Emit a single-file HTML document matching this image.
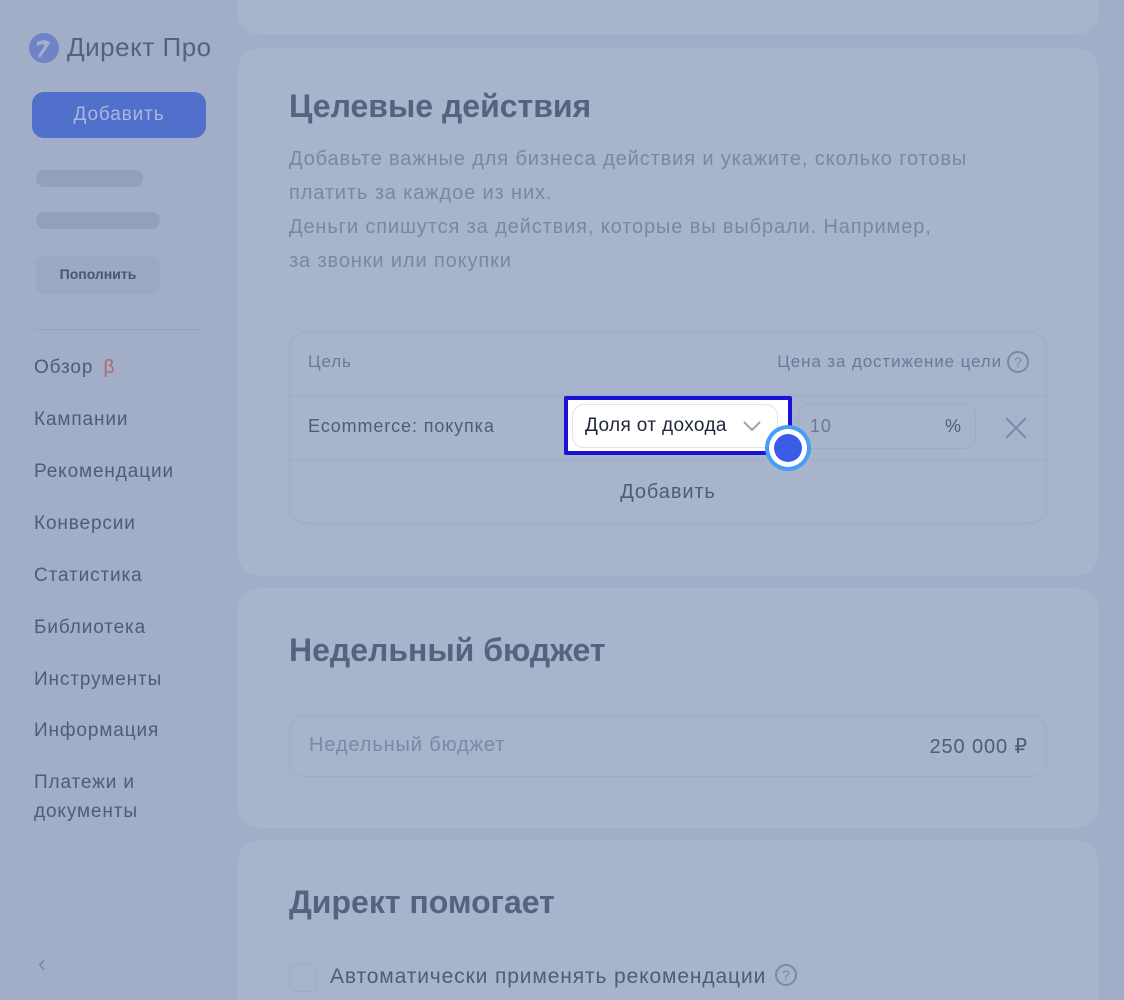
<!DOCTYPE html>
<html><head><meta charset="utf-8"><style>
*{box-sizing:border-box;margin:0;padding:0}
html{width:1124px;height:1000px;overflow:hidden}
body{width:1124px;height:1000px;overflow:hidden;background:#a2aec7;font-family:"Liberation Sans","DejaVu Sans",sans-serif;position:relative;color:#4f5c78;letter-spacing:0.055em}
.card{position:absolute;left:237px;width:862px;background:#a8b4cb;border-radius:24px;overflow:hidden}
.t{position:absolute;white-space:nowrap}
h2{position:absolute;left:52px;font-size:32px;font-weight:bold;color:#56637f;white-space:nowrap;letter-spacing:0}
.nav{position:absolute;left:34px;font-size:19px;color:#4f5c78}
.q{display:inline-block;width:22px;height:22px;border:2px solid #7c89a6;border-radius:50%;font-size:14px;text-align:center;line-height:18px;color:#7c89a6;letter-spacing:0;vertical-align:middle}
</style></head><body>
<svg style="position:absolute;left:28px;top:32px" width="32" height="32" viewBox="0 0 32 32"><circle cx="16" cy="16" r="15" fill="#6f84c4"/><path d="M9 10 Q18 6 22 11 L12 26 L10 24 L17 13 Q13 11 9 14Z" fill="#a3b0cd"/></svg>
<div class="t" style="left:67px;top:32px;font-size:26px;color:#55627e;letter-spacing:0.02em">Директ Про</div>
<div style="position:absolute;left:32px;top:92px;width:174px;height:46px;border-radius:12px;background:#5070cc"></div>
<div class="t" style="left:32px;top:104px;width:174px;text-align:center;font-size:19px;color:#a9b8dc">Добавить</div>
<div style="position:absolute;left:36px;top:170px;width:107px;height:17px;border-radius:9px;background:#929fbd"></div>
<div style="position:absolute;left:36px;top:212px;width:124px;height:17px;border-radius:9px;background:#929fbd"></div>
<div style="position:absolute;left:36px;top:256px;width:124px;height:38px;border-radius:8px;background:#9ca9c3"></div>
<div class="t" style="left:36px;top:266px;width:124px;text-align:center;font-size:14px;color:#4a5570;font-weight:bold;letter-spacing:0">Пополнить</div>
<div style="position:absolute;left:34px;top:329px;width:168px;height:1px;background:#95a2bd"></div>
<div class="nav" style="top:357px">Обзор <span style="color:#b06570;margin-left:4px">β</span></div>
<div class="nav" style="top:409px">Кампании</div>
<div class="nav" style="top:461px">Рекомендации</div>
<div class="nav" style="top:513px">Конверсии</div>
<div class="nav" style="top:565px">Статистика</div>
<div class="nav" style="top:617px">Библиотека</div>
<div class="nav" style="top:669px">Инструменты</div>
<div class="nav" style="top:720px">Информация</div>
<div class="nav" style="top:768px;line-height:29px">Платежи и<br>документы</div>
<div class="t" style="left:38px;top:950px;font-size:24px;color:#7c89a6">‹</div>

<div class="card" style="top:-40px;height:75px"></div>
<div class="card" style="top:48px;height:528px">
 <h2 style="top:40px">Целевые действия</h2>
 <div class="t" style="left:52px;top:94px;font-size:20px;line-height:34px;color:#7a87a3">Добавьте важные для бизнеса действия и укажите, сколько готовы<br>платить за каждое из них.<br>Деньги спишутся за действия, которые вы выбрали. Например,<br>за звонки или покупки</div>
 <div style="position:absolute;left:52px;top:283px;width:758px;height:193px;border:1px solid #9eabc5;border-radius:18px">
  <div class="t" style="left:18px;top:20px;font-size:17px;color:#6b7896">Цель</div>
  <div class="t" style="right:44px;top:20px;font-size:17px;color:#6b7896">Цена за достижение цели</div>
  <div class="q" style="position:absolute;right:17px;top:19px">?</div>
  <div style="position:absolute;left:0;right:0;top:63px;height:1px;background:#9eabc5"></div>
  <div class="t" style="left:18px;top:84px;font-size:18px;color:#4f5c78">Ecommerce: покупка</div>
  <div style="position:absolute;left:508px;top:71px;width:178px;height:46px;border:1px solid #9eabc5;border-radius:12px"></div>
  <div class="t" style="left:520px;top:84px;font-size:18px;color:#6b7896">10</div>
  <div class="t" style="left:655px;top:84px;font-size:18px;color:#4f5c78">%</div>
  <svg style="position:absolute;left:714px;top:84px" width="24" height="24"><path d="M2 2 L22 22 M22 2 L2 22" stroke="#7c89a6" stroke-width="2"/></svg>
  <div style="position:absolute;left:0;right:0;top:127px;height:1px;background:#9eabc5"></div>
  <div class="t" style="left:0;right:0;top:149px;text-align:center;font-size:20px;color:#4f5c78">Добавить</div>
 </div>
</div>
<div style="position:absolute;left:564px;top:396px;width:228px;height:59px;border:4px solid #1a12d6;background:#fff;border-radius:2px"></div>
<div style="position:absolute;left:572px;top:404px;width:206px;height:44px;border:1px solid #dfe3ee;border-radius:12px"></div>
<div class="t" style="left:585px;top:415px;font-size:19px;color:#202738;letter-spacing:0.02em">Доля от дохода</div>
<svg style="position:absolute;left:742px;top:420px" width="20" height="12"><path d="M2 2 L10 10 L18 2" fill="none" stroke="#9aa3b5" stroke-width="2"/></svg>
<div style="position:absolute;left:765px;top:425px;width:46px;height:46px;border-radius:50%;background:#4a9df5"></div>
<div style="position:absolute;left:769px;top:429px;width:38px;height:38px;border-radius:50%;background:#fff"></div>
<div style="position:absolute;left:774px;top:434px;width:28px;height:28px;border-radius:50%;background:#3a5de8"></div>

<div class="card" style="top:588px;height:240px">
 <h2 style="top:44px">Недельный бюджет</h2>
 <div style="position:absolute;left:52px;top:127px;width:758px;height:62px;border:1px solid #9eabc5;border-radius:16px">
  <div class="t" style="left:19px;top:18px;font-size:20px;color:#7c89a6">Недельный бюджет</div>
  <div class="t" style="right:18px;top:18px;font-size:20px;color:#4f5c78">250 000 ₽</div>
 </div>
</div>
<div class="card" style="top:840px;height:200px">
 <h2 style="top:44px">Директ помогает</h2>
 <div style="position:absolute;left:52px;top:124px;width:28px;height:28px;border:1px solid #9eabc5;border-radius:7px"></div>
 <div class="t" style="left:93px;top:125px;font-size:21px;color:#4f5c78">Автоматически применять рекомендации <span class="q" style="margin-left:2px;margin-top:-4px">?</span></div>
</div>
</body></html>
